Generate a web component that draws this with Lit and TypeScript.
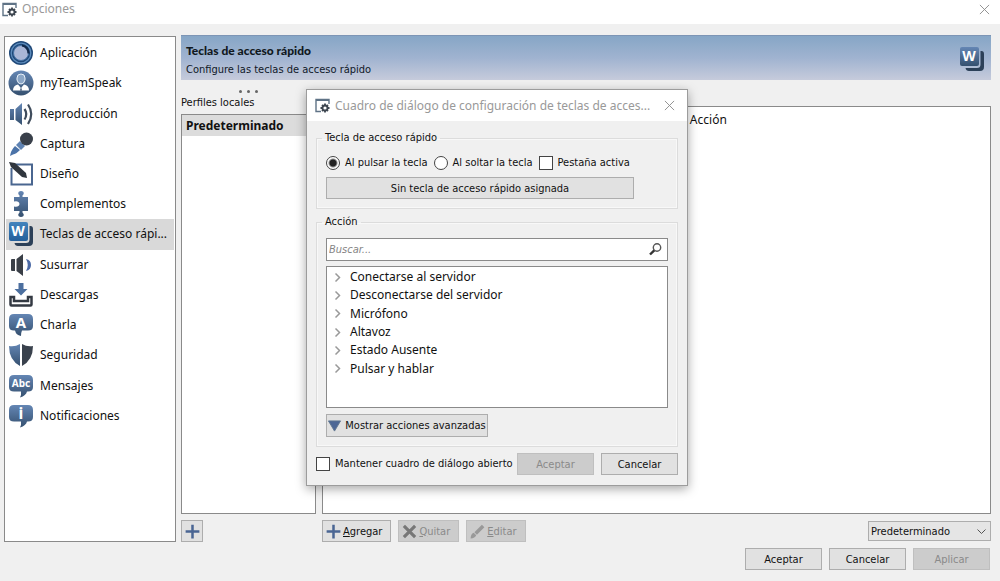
import { LitElement, html, css, svg } from 'lit';
import { customElement, state } from 'lit/decorators.js';

const gradient = (id: string) => svg`
  <defs><linearGradient id=${id} x1="0" y1="0" x2="0" y2="1">
    <stop offset="0" stop-color="#6486b4"/><stop offset="1" stop-color="#35506f"/>
  </linearGradient></defs>`;

const bubble = (id: string, label: string, size: number, left: boolean, y: number) => svg`
  ${gradient(id)}
  <path fill="url(#${id})" d=${left
    ? 'M5 1h14q5 0 5 5v7q0 4.500-5 4.500h-6q-1 2-1 5.500-5-1-6-5.500H5q-5 0-5-4.500V6q0-5 5-5z'
    : 'M5 1h14q5 0 5 5v7q0 4.500-5 4.500h-1q-1 4-7 6 1.500-3 1-6H5q-5 0-5-4.500V6q0-5 5-5z'}/>
  <text x="12" y=${y} text-anchor="middle" fill="#fff" font-weight="700" font-size=${size}
    font-family="Noto Sans, sans-serif">${label}</text>`;

const keyIcon = (id: string, top: string, bottom: string) => svg`
  <defs><linearGradient id=${id} x1="0" y1="0" x2="0" y2="1">
    <stop offset="0" stop-color=${top}/><stop offset="1" stop-color=${bottom}/>
  </linearGradient></defs>
  <path fill="#2c4058" d="M20.500 4h1q2.500 0 2.500 3v13q0 4-4 4H9q-3 0-3.500-3H17q3.500 0 3.500-3.500z"/>
  <rect x="0" y="0" width="19" height="19" rx="2" fill="url(#${id})"/>
  <text x="9" y="14" text-anchor="middle" fill="#fff" font-weight="700" font-size="14"
    font-family="Noto Sans, sans-serif">W</text>`;

const icons: Record<string, unknown> = {
  app: svg`
    <circle cx="12" cy="12" r="12" fill="#1f4878"/>
    <circle cx="12" cy="12" r="9.800" fill="none" stroke="#5d8cbc" stroke-width="1.300"/>
    <circle cx="12" cy="12" r="7.500" fill="#a9b6d6" stroke="#4673a5" stroke-width="1"/>
    <path d="M13 4.500a7.500 7.500 0 0 1 6.500 8" fill="none" stroke="#12294a" stroke-width="2.200"/>`,
  user: svg`
    ${gradient('gu')}
    <circle cx="12" cy="12" r="12.500" fill="url(#gu)"/>
    <path d="M4 19.500q0-5 5-6l3 3.500 3-3.500q5 1 5 6z" fill="#fff"/>
    <path d="M8 7q0-4 4-4t4 4v2q-1 4-4 4T8 9z" fill="#8ba6c6" stroke="#e8f0f8"/>
    <path d="M12 16l-1 3.500h2z" fill="#35506f"/>`,
  play: svg`
    ${gradient('gp')}
    <path d="M1 7h4v11H1zM6.500 7L13 1v22l-6.500-5z" fill="url(#gp)"/>
    <path d="M15.500 7q3.500 5 0 10.500M19 2.500q6.500 9.500 0 19.500" fill="none" stroke="#3f4c5c" stroke-width="2.200"/>`,
  mic: svg`
    <path d="M1 24q1-6 5-10l5 4q-4 4-7 4.500z" fill="#4b73a8"/>
    <path d="M7 13l4-4 5 5-4 4z" fill="#5f83b3"/>
    <circle cx="17.500" cy="7" r="6.500" fill="#39404a"/>`,
  design: svg`
    <path d="M6 2.500h17v20H2.500V6" fill="none" stroke="#4a6690" stroke-width="2"/>
    <path d="M0 0l6 1 11 10 1 5-5-1L2 5z" fill="#30363e"/>`,
  puzzle: svg`
    ${gradient('gz')}
    <path fill="url(#gz)" d="M5 5h5.500V3.500Q8.500 2 9.500 0q2.500-2 5 0 1 2-1 3.500V5H19v14h-5.500v1.500q2 1.500 1 3.500-2.500 2-5 0-1-2 1-3.500V19H5v-4.500q5 1 5.500-2.500Q10 8.500 5 9.500z"/>`,
  key: keyIcon('gk', '#4384bd', '#235f9b'),
  whisper: svg`
    <path d="M2 7q0-1 1-1h3v12H3q-1 0-1-1zM7.500 6L14 1v22l-6.500-5z" fill="#3a3f47"/>
    <path d="M17 6q5 1 5 6t-5 6q3.500-6 0-12z" fill="#4c6aa6"/>`,
  download: svg`
    <path d="M9.500 0h5v6h4L12 12.500 5.500 6h4z" fill="#4c6f9f"/>
    <path d="M5 14H1.500v7.500q0 1 1 1h19q1 0 1-1V14H19v4H5z" fill="none" stroke="#343a43" stroke-width="2.500"/>`,
  chat: bubble('gc', 'A', 15, true, 15),
  shield: svg`
    ${gradient('gs')}
    <path d="M11 1v22Q0 17 0 3q6 1 11-2z" fill="url(#gs)"/>
    <path d="M13 1v22q11-6 11-20-6 1-11-2z" fill="#3a424d"/>`,
  abc: bubble('gm', 'Abc', 10, false, 13),
  info: bubble('gi', 'i', 16, false, 15),
};

const icon = (content: unknown, cls = 'icon') =>
  html`<svg class=${cls} viewBox="0 0 24 24" aria-hidden="true">${content}</svg>`;

const windowIcon = html`
  <svg class="window-icon" viewBox="0 0 15 15" aria-hidden="true">
    <path d="M6 13.500H1v-12h13V6" fill="none" stroke="#5f7386" stroke-width="1.400"/>
    <path d="M1 2h13" stroke="#5f7386" stroke-width="2"/>
    <path d="M10 5.500v9M5.500 10h9M7 7l6 6M13 7l-6 6" stroke="#3d4650" stroke-width="1.800"/>
    <circle cx="10" cy="10" r="2.500" fill="#fff" stroke="#3d4650" stroke-width="1.800"/>
  </svg>`;

const closeIcon = html`
  <svg class="close-icon" viewBox="0 0 12 12" aria-hidden="true">
    <path d="M1 1l10 10M11 1L1 11" stroke="#8b8b8b"/>
  </svg>`;

const plusIcon = icon(svg`<path d="M12 1v22M1 12h22" stroke="#4a6593" stroke-width="4"/>`, 'tool-icon');

const pages = [
  ['app', 'Aplicación'],
  ['user', 'myTeamSpeak'],
  ['play', 'Reproducción'],
  ['mic', 'Captura'],
  ['design', 'Diseño'],
  ['puzzle', 'Complementos'],
  ['key', 'Teclas de acceso rápi...'],
  ['whisper', 'Susurrar'],
  ['download', 'Descargas'],
  ['chat', 'Charla'],
  ['shield', 'Seguridad'],
  ['abc', 'Mensajes'],
  ['info', 'Notificaciones'],
];

const actions = [
  'Conectarse al servidor',
  'Desconectarse del servidor',
  'Micrófono',
  'Altavoz',
  'Estado Ausente',
  'Pulsar y hablar',
];

const shared = css`
  * { box-sizing: border-box; }
  button, input, select { font: inherit; color: inherit; margin: 0; }
  button { padding: 0; }
  svg { display: block; flex: none; overflow: visible; }
  .title-text, .ui { font-family: 'Noto Sans', 'Open Sans', sans-serif; font-size: 12px; }
  .title-text { flex: 1; color: #999; white-space: nowrap; font-weight: 400; margin: 0; }
  .window-icon { width: 15px; height: 15px; }
  .close { border: 0; background: none; padding: 4px; }
  .close-icon { width: 11px; height: 11px; }
  .btn {
    display: flex; align-items: center; justify-content: center; flex: none;
    height: 22px; padding-top: 1px; border: 1px solid #adadad; background: #e1e1e1; white-space: nowrap;
  }
  .btn.wide { width: 77px; }
  .btn:disabled { background: #cccccc; border-color: #bfbfbf; color: #8a8a8a; }
`;

@customElement('hotkey-dialog')
export class HotkeyDialog extends LitElement {
  @state() private mode = 'press';

  static styles = [shared, css`
    :host {
      display: block; background: #f0f0f0; border: 1px solid #9c9c9c;
      box-shadow: 0 3px 10px rgba(0, 0, 0, 0.35);
    }
    .titlebar {
      display: flex; align-items: center; gap: 5px; height: 31px;
      background: #fff; padding: 0 8px;
    }
    .content { display: flex; flex-direction: column; gap: 6px; padding: 10px 9px; }
    fieldset {
      margin: 0; padding: 7px 9px 9px; border: 1px solid #dcdcdc; min-width: 0;
      box-shadow: inset 0 0 0 1px #f8f8f8;
    }
    legend { padding: 0 3px; margin-left: -4px; line-height: 14px; }
    .options { display: flex; align-items: center; gap: 6px; height: 22px; }
    label { display: flex; align-items: center; gap: 5px; white-space: nowrap; }
    input[type='radio'], input[type='checkbox'] {
      appearance: none; flex: none; width: 14px; height: 14px;
      border: 1px solid #444; background: #fff;
    }
    input[type='radio'] { border-radius: 50%; }
    input[type='radio']:checked { background: radial-gradient(circle, #222 0 3px, #fff 5px); }
    .assign { width: 308px; margin-top: 3px; }
    .search {
      display: flex; align-items: center; height: 23px; margin-top: 2px;
      border: 1px solid #8a8a8a; background: #fff; padding: 0 5px 0 2px;
    }
    .search input {
      flex: 1; min-width: 0; border: 0; padding: 1px 0 0; background: none; outline: none;
    }
    .search input::placeholder { color: #858585; font-style: italic; opacity: 1; }
    .search-icon { width: 13px; height: 13px; }
    .tree {
      list-style: none; margin: 5px 0 6px; padding: 1px 0 29px 7px;
      border: 1px solid #8a8a8a; background: #fff;
      display: grid; grid-auto-rows: 1fr; height: 142px;
    }
    .tree li { display: flex; align-items: center; gap: 9px; }
    .chevron { width: 7px; height: 9px; }
    .advanced { width: 162px; gap: 4px; height: 23px; }
    .arrow { width: 13px; height: 12px; }
    .footer, .buttons { display: flex; align-items: center; }
    .footer { justify-content: space-between; }
    .buttons { gap: 7px; }
  `];

  render() {
    return html`
      <header class="titlebar">
        ${windowIcon}
        <h2 class="title-text">Cuadro de diálogo de configuración de teclas de acces...</h2>
        <button class="close" aria-label="Cerrar">${closeIcon}</button>
      </header>
      <div class="content">
        <fieldset>
          <legend>Tecla de acceso rápido</legend>
          <div class="options">
            <label><input type="radio" name="mode" .checked=${this.mode === 'press'}
              @change=${() => (this.mode = 'press')}>Al pulsar la tecla</label>
            <label><input type="radio" name="mode" .checked=${this.mode === 'release'}
              @change=${() => (this.mode = 'release')}>Al soltar la tecla</label>
            <label><input type="checkbox">Pestaña activa</label>
          </div>
          <button class="btn assign">Sin tecla de acceso rápido asignada</button>
        </fieldset>
        <fieldset>
          <legend>Acción</legend>
          <div class="search">
            <input type="text" placeholder="Buscar..." aria-label="Buscar">
            <svg class="search-icon" viewBox="0 0 13 13" aria-hidden="true">
              <circle cx="8" cy="4.500" r="3.700" fill="none" stroke="#555" stroke-width="1.400"/>
              <path d="M5.300 7.300L1 11.500" stroke="#333" stroke-width="2.400"/>
            </svg>
          </div>
          <ul class="tree ui">
            ${actions.map((name) => html`
              <li>
                <svg class="chevron" viewBox="0 0 7 9" aria-hidden="true">
                  <path d="M1.500 0.500l4 4-4 4" fill="none" stroke="#999" stroke-width="1.500"/>
                </svg>
                <span>${name}</span>
              </li>`)}
          </ul>
          <button class="btn advanced">
            <svg class="arrow" viewBox="0 0 14 12" aria-hidden="true">
              <path d="M0.500 0.500h13L7 11.500z" fill="#4d6796" stroke="#5f7690"/>
            </svg>
            Mostrar acciones avanzadas
          </button>
        </fieldset>
        <div class="footer">
          <label><input type="checkbox">Mantener cuadro de diálogo abierto</label>
          <div class="buttons">
            <button class="btn wide" disabled>Aceptar</button>
            <button class="btn wide">Cancelar</button>
          </div>
        </div>
      </div>`;
  }
}

@customElement('app-root')
export class AppRoot extends LitElement {
  @state() private page = 'key';

  static styles = [shared, css`
    :host {
      display: flex; flex-direction: column; position: relative; min-height: 100vh;
      background: #f0f0f0; color: #111;
      font-family: 'DejaVu Sans Condensed', 'DejaVu Sans', sans-serif; font-size: 11px; line-height: 14px;
    }
    .titlebar {
      display: flex; align-items: center; gap: 5px; height: 24px;
      background: #fff; padding: 0 6px 6px 2px;
    }
    .body { flex: 1; display: flex; gap: 5px; padding: 11px 9px 0 4px; }
    .sidebar {
      width: 172px; flex: none; margin-top: 1px; border: 1px solid #8a8a8a; background: #fff;
    }
    .pages {
      list-style: none; margin: 0; padding: 1px; height: 395px;
      display: grid; grid-auto-rows: 1fr;
    }
    .pages li { display: flex; }
    .page {
      flex: 1; display: flex; align-items: center; gap: 7px; padding: 0 3px; border: 0;
      background: none; text-align: left; white-space: nowrap;
    }
    .page.current { background: #d9d9d9; }
    .icon { width: 24px; height: 24px; }
    main { flex: 1; min-width: 0; display: flex; flex-direction: column; }
    .banner {
      display: flex; align-items: center; justify-content: space-between;
      height: 45px; padding: 2px 7px 0 5px; border-top: 1px solid #7d95b5;
      background: linear-gradient(#86a6c6, #a0b3d0 50%, #c6cbdb);
    }
    .heading { margin: 0 0 3px; font: 900 12px/18px 'Lato', sans-serif; color: #101820; }
    .banner p { margin: 0; color: #101828; }
    .columns { flex: 1; display: flex; gap: 6px; }
    .profiles { width: 135px; flex: none; display: flex; flex-direction: column; }
    .grip { display: flex; justify-content: center; gap: 5px; padding-top: 10px; }
    .dot { width: 3px; height: 3px; border-radius: 50%; background: #666; }
    .caption { margin: 3px 0 4px; }
    .list { flex: 1; border: 1px solid #8a8a8a; background: #fff; margin: 0; padding: 0; list-style: none; }
    .list li { padding: 0 4px; line-height: 21px; background: #dcdcdc; font-weight: 700; }
    .hotkeys { flex: 1; min-width: 0; display: flex; flex-direction: column; padding-top: 26px; }
    .table-box { flex: 1; border: 1px solid #8a8a8a; background: #fff; }
    table { width: 100%; border-collapse: collapse; table-layout: fixed; }
    th { padding: 4px 0 0; line-height: 18px; font-weight: 400; text-align: left; }
    .key-column { width: 55%; }
    .tools { display: flex; align-items: center; gap: 7px; height: 22px; margin-top: 6px; }
    .tools .btn { gap: 2px; padding: 0 8px 0 3px; }
    .tools .square { width: 22px; padding: 0; }
    .tools span { padding-top: 1px; }
    .tool-icon { width: 15px; height: 15px; }
    .select { position: relative; display: flex; align-items: center; margin-left: auto; }
    .select select {
      appearance: none; width: 123px; height: 20px; padding: 1px 20px 0 2px; border: 1px solid #adadad;
      border-radius: 0; background: #e5e5e5;
    }
    .caret { position: absolute; right: 5px; width: 9px; height: 5px; pointer-events: none; }
    .footer { display: flex; justify-content: flex-end; gap: 7px; padding: 6px 10px 11px; }
    hotkey-dialog { position: absolute; left: 306px; top: 89px; width: 382px; }
  `];

  render() {
    return html`
      <header class="titlebar">
        ${windowIcon}
        <h1 class="title-text">Opciones</h1>
        <button class="close" aria-label="Cerrar">${closeIcon}</button>
      </header>
      <div class="body">
        <nav class="sidebar">
          <ul class="pages">
            ${pages.map(([id, name]) => html`
              <li>
                <button class="page ui ${id === this.page ? 'current' : ''}" @click=${() => (this.page = id)}>
                  ${icon(icons[id])}<span>${name}</span>
                </button>
              </li>`)}
          </ul>
        </nav>
        <main>
          <header class="banner">
            <div>
              <h2 class="heading">Teclas de acceso rápido</h2>
              <p>Configure las teclas de acceso rápido</p>
            </div>
            ${icon(keyIcon('gb', '#6486b4', '#35506f'))}
          </header>
          <div class="columns">
            <section class="profiles">
              <div class="grip"><i class="dot"></i><i class="dot"></i><i class="dot"></i></div>
              <p class="caption">Perfiles locales</p>
              <ul class="list ui"><li>Predeterminado</li></ul>
              <div class="tools">
                <button class="btn square" aria-label="Agregar perfil">${plusIcon}</button>
              </div>
            </section>
            <section class="hotkeys">
              <div class="table-box">
                <table class="ui">
                  <thead><tr><td class="key-column"></td><th scope="col">Acción</th></tr></thead>
                </table>
              </div>
              <div class="tools">
                <button class="btn">${plusIcon}<span><u>A</u>gregar</span></button>
                <button class="btn" disabled>
                  ${icon(svg`<path d="M3 3l18 18M21 3L3 21" stroke="#777" stroke-width="5"/>`, 'tool-icon')}
                  <span><u>Q</u>uitar</span>
                </button>
                <button class="btn" disabled>
                  ${icon(svg`<path d="M1 23q0-7 5-9l4 4q-2 5-9 5zM7 13L19 1l4 4-12 12z" fill="#999"/>`, 'tool-icon')}
                  <span><u>E</u>ditar</span>
                </button>
                <div class="select">
                  <select aria-label="Perfil"><option>Predeterminado</option></select>
                  <svg class="caret" viewBox="0 0 9 5" aria-hidden="true">
                    <path d="M0.500 0.500l4 4 4-4" fill="none" stroke="#555"/>
                  </svg>
                </div>
              </div>
            </section>
          </div>
        </main>
      </div>
      <footer class="footer">
        <button class="btn wide">Aceptar</button>
        <button class="btn wide">Cancelar</button>
        <button class="btn wide" disabled>Aplicar</button>
      </footer>
      <hotkey-dialog role="dialog"></hotkey-dialog>`;
  }
}
